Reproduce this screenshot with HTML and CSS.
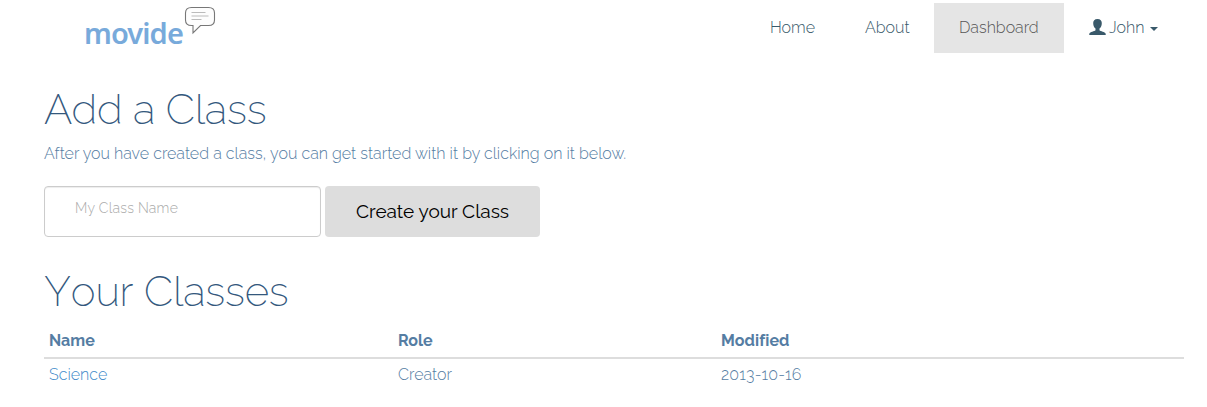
FILE: index.html
```html
<!DOCTYPE html>
<html lang="en">
<head>
<meta charset="utf-8">
<title>Movide</title>
<link rel="stylesheet" href="styles.css">
</head>
<body>
<header class="navbar">
  <a class="brand"><span class="brand-name">movide</span><svg class="bubble" width="32" height="30" viewBox="0 0 32 30" fill="#fdfdfd" stroke="#777" stroke-width="1.1"><path d="M7.500 1.500h17Q30.500 1.500 30.500 7v7q0 5.500-6 5.500H16.500L9 27v-7.500H7.500Q1.500 19.500 1.500 14V7Q1.500 1.500 7.500 1.500Z"/><path d="M7.500 6.500h14M7.500 10h17M7.500 13.500h10" stroke="#bbb"/></svg></a>
  <nav class="nav">
    <a class="nav-link">Home</a>
    <a class="nav-link nav-about">About</a>
    <a class="nav-link active">Dashboard</a>
    <a class="nav-link nav-user"><svg class="user" width="17" height="16" viewBox="0 0 17 16"><path fill="#39596a" d="M8.500 0C5.500 0 4.200 1.700 4.200 4c0 2.800 1 4.500 2.300 5.600v1.600C5.500 12.300 1 12.800.4 14.400L.2 16h16.600l-.2-1.600c-.6-1.600-5.100-2.100-6.100-3.200V9.600C11.800 8.500 12.800 6.800 12.800 4c0-2.300-1.300-4-4.300-4Z"/></svg>John<i class="caret"></i></a>
  </nav>
</header>
<main class="content">
  <h1 class="heading">Add a Class</h1>
  <p class="lead">After you have created a class, you can get started with it by clicking on it below.</p>
  <form class="create-form">
    <input class="field" type="text" placeholder="My Class Name">
    <button class="create" type="button">Create your Class</button>
  </form>
  <h1 class="heading classes-heading">Your Classes</h1>
  <table class="classes">
    <thead><tr><th class="c-name">Name</th><th class="c-role">Role</th><th class="c-modified">Modified</th></tr></thead>
    <tbody><tr><td><a class="class-link">Science</a></td><td class="role">Creator</td><td class="date">2013-10-16</td></tr></tbody>
  </table>
</main>
</body>
</html>
```
FILE: styles.css
```css
* { box-sizing: border-box; }
body { margin: 0; background: #fff; color: #557da3; font: 300 16px/24px Raleway, Lato, sans-serif; }
.navbar { display: flex; justify-content: space-between; height: 53px; padding: 3px 23px 0 84px; }
.brand { display: flex; align-items: flex-start; }
.brand-name { width: 100px; font: 600 29px/36px "Noto Sans", sans-serif; color: #78aadb; padding-top: 12px; letter-spacing: -0.9px; }
.bubble { margin-top: 3px; }
.nav { display: flex; }
.nav-link { display: flex; align-items: center; height: 50px; padding: 0 25px; color: #39596a; white-space: nowrap; }
.nav-about { width: 94px; }
.active { width: 130px; background: #e5e5e5; color: #555; }
.nav-user { width: 120px; }
.user { margin: -2px 3px 0 0; flex: none; }
.caret { margin: 2px 0 0 6px; border: 4px solid transparent; border-top-color: #39596a; border-bottom: 0; }
.content { padding: 34px 23px 0 44px; }
.heading { margin: 0; height: 46px; font-size: 42px; line-height: 46px; font-weight: 200; letter-spacing: -0.2px; color: #34587d; white-space: nowrap; }
.lead { margin: 9px 0 20px; height: 24px; white-space: nowrap; }
.create-form { display: flex; gap: 4px; height: 51px; }
.field { width: 277px; border: 1px solid #ccc; border-radius: 4px; padding: 0 30px 7px; font: 300 14px/20px Raleway, Lato, sans-serif; letter-spacing: 0.22px; box-shadow: inset 0 1px 1px rgba(0,0,0,.075); }
.field::placeholder { color: #aaa; opacity: 1; }
.create { width: 215px; border: 0; border-radius: 4px; background: #ddd; color: #000; font: 400 19px/24px Raleway, Lato, sans-serif; padding: 0 0 2px; white-space: nowrap; }
.classes-heading { margin-top: 32px; font-kerning: none; }
.classes { width: 100%; margin-top: 8px; table-layout: fixed; border-collapse: collapse; }
.classes th, .classes td { text-align: left; padding: 5px; }
.classes th { height: 35px; padding: 5px 5px 4px; font-weight: 700; border-bottom: 2px solid #ddd; }
.classes td { padding-top: 4px; }
.c-name { width: 349px; }
.c-role { width: 323px; }
.c-modified { letter-spacing: 0.1px; }
.class-link { color: #428bca; }
.date { letter-spacing: 0.2px; }
```
